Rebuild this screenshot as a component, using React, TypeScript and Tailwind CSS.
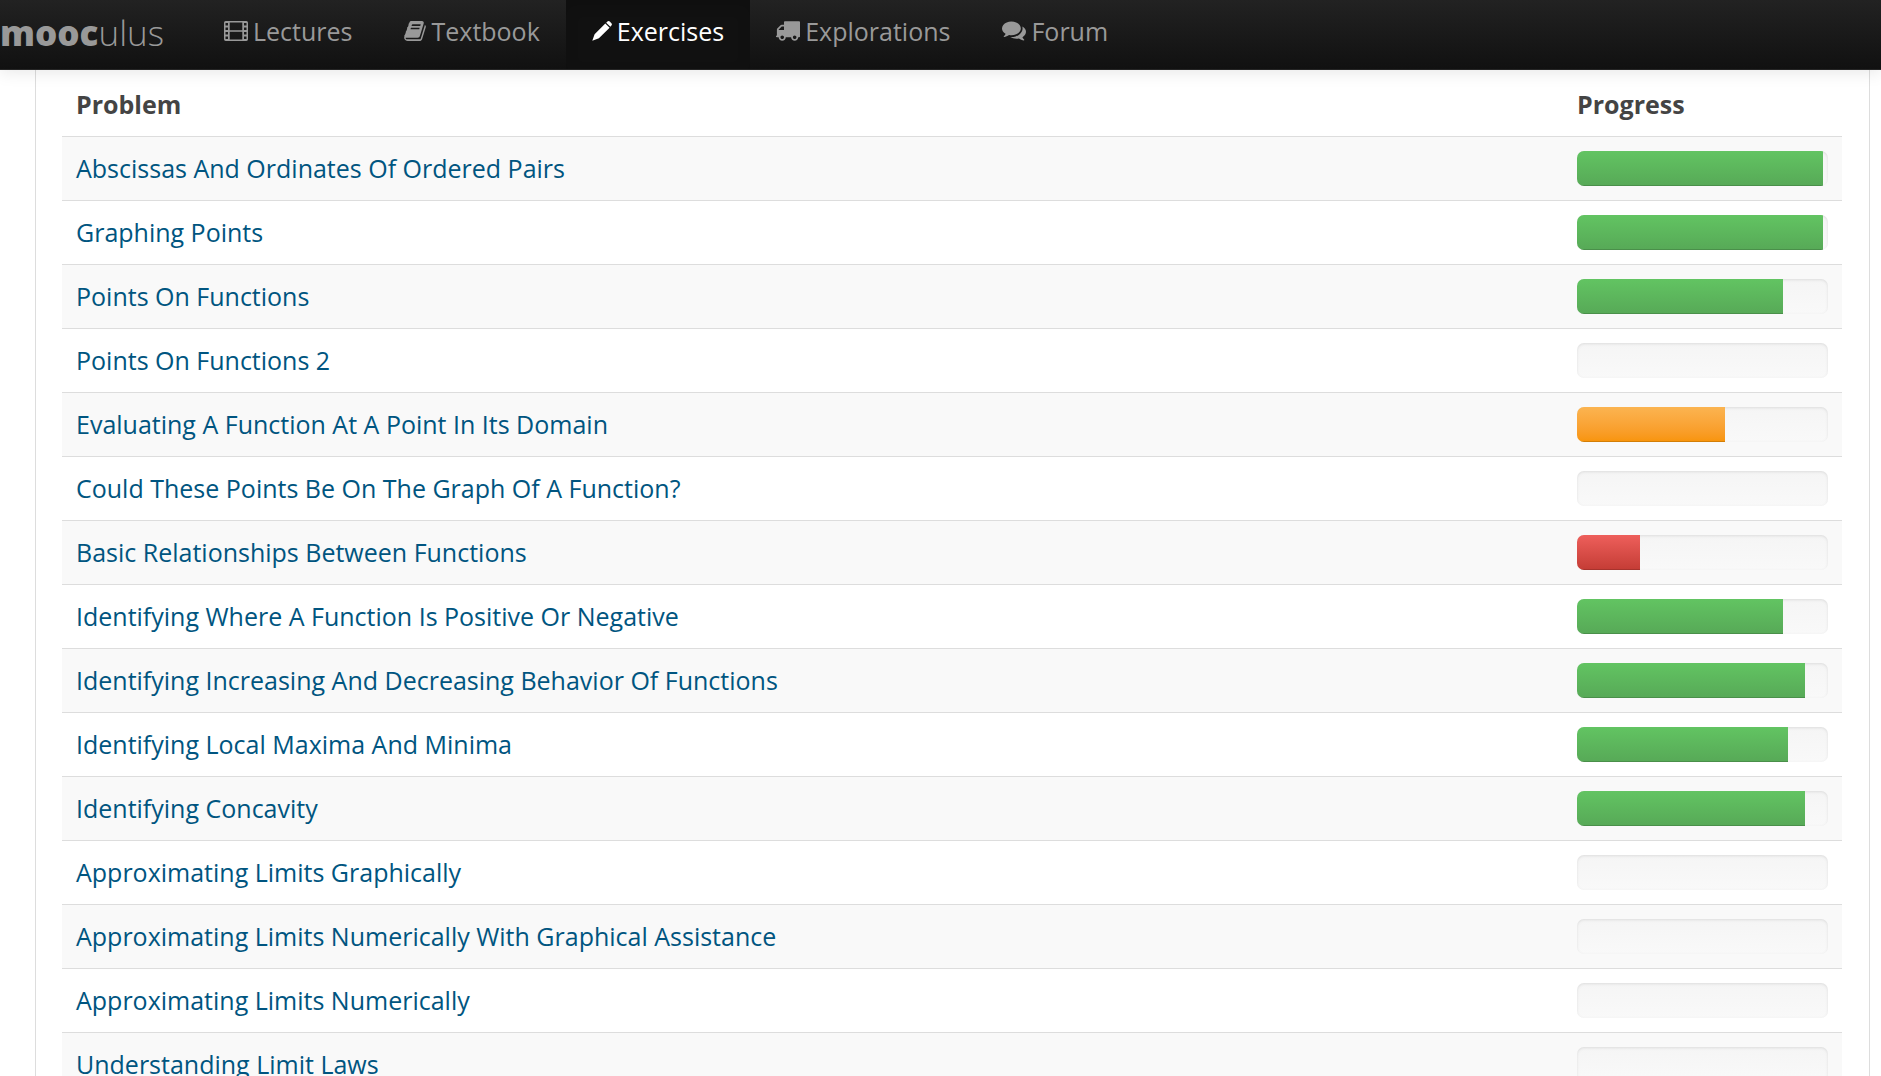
import React from "react";

type IconProps = { className?: string };

const FilmIcon = ({ className }: IconProps) => (
  <svg viewBox="0 0 24 20" className={className} fill="currentColor" fillRule="evenodd" aria-hidden="true">
    <path d="M1.700 0h20.600q1.700 0 1.700 1.700v16.600q0 1.700-1.700 1.700h-20.600q-1.700 0-1.700-1.700v-16.600q0-1.700 1.700-1.700zM1.500 2v2.500h2.500v-2.500zM1.500 6.500v2.500h2.500v-2.500zM1.500 11v2.500h2.500v-2.500zM1.500 15.500v2.500h2.500v-2.500zM20 2v2.500h2.500v-2.500zM20 6.500v2.500h2.500v-2.500zM20 11v2.500h2.500v-2.500zM20 15.500v2.500h2.500v-2.500zM5.700 1.500v7.700h12.600v-7.700zM5.700 10.800v7.700h12.600v-7.700z" />
  </svg>
);

const BookIcon = ({ className }: IconProps) => (
  <svg viewBox="64 128 1664 1536" className={className} fill="currentColor" aria-hidden="true">
    <path d="M1703 478q40 57 18 129l-275 906q-19 64-76.500 107.500t-122.500 43.500h-923q-77 0-148.500-53.500t-99.500-131.500q-24-67-2-127 0-4 3-27t4-37q1-8-3-21.500t-3-19.500q2-11 8-21t16.500-23.500 16.500-23.500q23-38 45-91.500t30-91.500q3-10 .5-30t-.5-28q3-11 17-28t17-23q21-36 42-92t25-90q1-9-2.500-32t.5-28q4-13 22-30.500t22-22.500q19-26 42.500-84.500t27.500-96.500q1-8-3-25.500t-2-26.500q2-8 9-18t18-23 17-21q8-12 16.500-30.500t15-35 16-36 19.500-32 26.500-23.500 36-11.500 47.500 5.500l-1 3q38-9 51-9h761q74 0 114 56t18 130l-274 906q-36 119-71.500 153.500t-128.500 34.500h-869q-27 0-38 15-11 16-1 43 24 70 144 70h923q29 0 56-15.500t35-41.500l300-987q7-22 5-57 38 15 59 43zm-1064 2q-4 13 2 22.500t20 9.500h608q13 0 25.500-9.500t16.500-22.500l21-64q4-13-2-22.500t-20-9.500h-608q-13 0-25.500 9.500t-16.500 22.500zm-83 256q-4 13 2 22.500t20 9.500h608q13 0 25.500-9.500t16.500-22.500l21-64q4-13-2-22.500t-20-9.500h-608q-13 0-25.500 9.500t-16.500 22.500z" />
  </svg>
);

const PencilIcon = ({ className }: IconProps) => (
  <svg viewBox="0 0 20 20" className={className} fill="currentColor" aria-hidden="true">
    <path d="M13.300 2.600l4.300 4.200L6.900 17.300L0.300 19.800L2.600 13.200zM14.200 1.700l1.200-1.100q1.200-1 2.400 0l1.600 1.600q1 1.200 0 2.400l-1 1.200z" />
  </svg>
);

const TruckIcon = ({ className }: IconProps) => (
  <svg viewBox="64 256 1728 1408" className={className} fill="currentColor" aria-hidden="true">
    <path d="M640 1408q0-52-38-90t-90-38-90 38-38 90 38 90 90 38 90-38 38-90zm-384-512h384v-256h-158q-13 0-22 9l-195 195q-9 9-9 22v30zm1280 512q0-52-38-90t-90-38-90 38-38 90 38 90 90 38 90-38 38-90zm256-1088v1024q0 15-4 26.500t-13.500 18.500-16.500 11.500-23.500 6-22.500 2-25.500 0-22.500-.5q0 106-75 181t-181 75-181-75-75-181h-384q0 106-75 181t-181 75-181-75-75-181h-64q-3 0-22.500.5t-25.500 0-22.500-2-23.500-6-16.500-11.500-13.500-18.500-4-26.500q0-26 19-45t45-19v-320q0-8-.5-35t0-38 2.500-34.500 6.500-37 14-30.500 22.500-30l198-198q19-19 50.500-32t58.500-13h160v-192q0-26 19-45t45-19h1024q26 0 45 19t19 45z" />
  </svg>
);

const CommentsIcon = ({ className }: IconProps) => (
  <svg viewBox="0 256 1792 1408" className={className} fill="currentColor" aria-hidden="true">
    <path d="M1408 768q0 139-94 257t-256.500 186.500-353.500 68.500q-86 0-176-16-124 88-278 128-36 9-86 16h-3q-11 0-20.500-8t-11.500-21q-1-3-1-6.500t.5-6.500 2-6l2.500-5t3.500-5.500 4-5 4.500-5 4-4.500q5-6 23-25t26-29.500 22.500-29 25-38.500 20.500-44q-124-72-195-177t-71-224q0-139 94-257t256.500-186.500 353.500-68.500 353.500 68.500 256.500 186.500 94 257zm384 256q0 120-71 224.500t-195 176.500q10 24 20.500 44t25 38.500 22.500 29 26 29.500 23 25q1 1 4 4.500t4.500 5 4 5 3.500 5.500l2.500 5t2 6 .5 6.500-1 6.500q-3 14-13 22t-22 7q-50-7-86-16-154-40-278-128-90 16-176 16-271 0-472-132 58 4 88 4 161 0 309-45t264-129q125-92 192-212t67-254q0-77-23-152 129 71 204 178t75 230z" />
  </svg>
);

const navItems = [
  { label: "Lectures", icon: <FilmIcon className="h-5 w-6" /> },
  { label: "Textbook", icon: <BookIcon className="h-5 w-[22px]" /> },
  { label: "Exercises", icon: <PencilIcon className="h-5 w-5" />, active: true },
  { label: "Explorations", icon: <TruckIcon className="h-5 w-6" /> },
  { label: "Forum", icon: <CommentsIcon className="h-5 w-6" /> },
];

const tones = {
  success: "bg-linear-to-b from-[#62c462] to-[#57a957]",
  warning: "bg-linear-to-b from-[#fbb450] to-[#f89406]",
  danger: "bg-linear-to-b from-[#ee5f5b] to-[#c43c35]",
};

type Exercise = { title: string; progress: number; tone?: keyof typeof tones };

const exercises: Exercise[] = [
  { title: "Abscissas And Ordinates Of Ordered Pairs", progress: 98, tone: "success" },
  { title: "Graphing Points", progress: 98, tone: "success" },
  { title: "Points On Functions", progress: 82, tone: "success" },
  { title: "Points On Functions 2", progress: 0 },
  { title: "Evaluating A Function At A Point In Its Domain", progress: 59, tone: "warning" },
  { title: "Could These Points Be On The Graph Of A Function?", progress: 0 },
  { title: "Basic Relationships Between Functions", progress: 25, tone: "danger" },
  { title: "Identifying Where A Function Is Positive Or Negative", progress: 82, tone: "success" },
  { title: "Identifying Increasing And Decreasing Behavior Of Functions", progress: 91, tone: "success" },
  { title: "Identifying Local Maxima And Minima", progress: 84, tone: "success" },
  { title: "Identifying Concavity", progress: 91, tone: "success" },
  { title: "Approximating Limits Graphically", progress: 0 },
  { title: "Approximating Limits Numerically With Graphical Assistance", progress: 0 },
  { title: "Approximating Limits Numerically", progress: 0 },
  { title: "Understanding Limit Laws", progress: 0 },
];

function ProgressBar({ title, progress, tone }: Exercise) {
  return (
    <div
      role="progressbar"
      aria-label={title}
      aria-valuenow={progress}
      aria-valuemin={0}
      aria-valuemax={100}
      className="h-[35px] overflow-hidden rounded-[7px] bg-linear-to-b from-[#f5f5f5] to-[#f9f9f9] shadow-[inset_0_1px_3px_rgba(0,0,0,0.1)]"
    >
      {tone && (
        <div
          className={`h-full shadow-[inset_0_-1px_0_rgba(0,0,0,0.15)] ${tones[tone]}`}
          style={{ width: `${progress}%` }}
        />
      )}
    </div>
  );
}

export default function App() {
  return (
    <div className="min-h-screen bg-white font-['Open_Sans',sans-serif] text-[25px] leading-[35px] text-[#444]">
      <header className="sticky top-0 z-10 flex h-[70px] items-stretch border-b border-[#252525] bg-linear-to-b from-[#222] to-[#111] text-[#999] shadow-[0_2px_16px_rgba(0,0,0,0.1)]">
        <a href="#home" className="w-[198px] pt-[15px] text-[35px] font-light">
          <span className="font-extrabold">mooc</span>ulus
        </a>
        <nav className="flex">
          {navItems.map(({ label, icon, active }) => (
            <a
              key={label}
              href={`#${label.toLowerCase()}`}
              aria-current={active ? "page" : undefined}
              className={`flex items-center gap-[5px] px-[26px] pb-[7px] ${
                active ? "bg-[#111] text-white shadow-[inset_0_5px_14px_rgba(0,0,0,0.125)]" : ""
              }`}
            >
              {icon}
              {label}
            </a>
          ))}
        </nav>
      </header>

      <main className="mr-[11px] ml-[35px] border-x border-[#ddd] pt-[2px] pr-[27px] pl-[26px]">
        <table className="w-full table-fixed">
          <thead>
            <tr>
              <th className="px-[14px] pt-[15px] pb-[14px] text-left font-bold">Problem</th>
              <th className="w-[279px] px-[14px] pt-[15px] pb-[14px] text-left font-bold">Progress</th>
            </tr>
          </thead>
          <tbody>
            {exercises.map((exercise) => (
              <tr key={exercise.title} className="border-t border-[#ddd] odd:bg-[#f9f9f9]">
                <td className="px-[14px] py-[14px]">
                  <a href="#exercise" className="block text-[#005580]">
                    {exercise.title}
                  </a>
                </td>
                <td className="px-[14px] py-[14px]">
                  <ProgressBar {...exercise} />
                </td>
              </tr>
            ))}
          </tbody>
        </table>
      </main>
    </div>
  );
}
